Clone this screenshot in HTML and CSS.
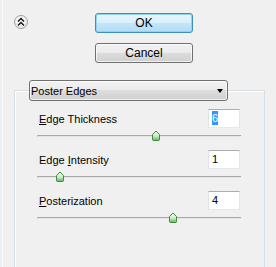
FILE: index.html
```html
<!DOCTYPE html>
<html lang="en">
<head>
    <meta charset="UTF-8">
    <meta name="viewport" content="width=device-width, initial-scale=1.0">
    <title>Poster Edges</title>
    <link rel="stylesheet" href="styles.css">
</head>
<body>
    <div class="window">
        <div class="header">
            <button class="collapse" title="Collapse">
                <svg width="10" height="10" viewBox="0 0 10 10">
                    <path d="M2 4.5 L5 1.5 L8 4.5 M2 8.5 L5 5.5 L8 8.5" fill="none" stroke="#1a1a1a" stroke-width="1.5"/>
                </svg>
            </button>
            <div class="actions">
                <button class="btn btn-default">OK</button>
                <button class="btn">Cancel</button>
            </div>
        </div>

        <div class="group">
            <div class="select">
                <span>Poster Edges</span>
                <span class="arrow"></span>
            </div>

            <div class="param">
                <div class="param-head">
                    <label><u>E</u>dge Thickness</label>
                    <div class="field"><span class="selected">6</span></div>
                </div>
                <div class="slider">
                    <div class="track"></div>
                    <svg class="thumb" style="left: 115px" width="8" height="11" viewBox="0 0 8 11">
                        <path d="M0.5 4.5 L4 1 L7.5 4.5 V9.5 Q7.5 10.5 6.5 10.5 H1.5 Q0.5 10.5 0.5 9.5 Z" fill="url(#thumbFill)" stroke="#3d8a3d"/>
                    </svg>
                </div>
            </div>

            <div class="param">
                <div class="param-head">
                    <label>Edge <u>I</u>ntensity</label>
                    <div class="field">1</div>
                </div>
                <div class="slider">
                    <div class="track"></div>
                    <svg class="thumb" style="left: 19px" width="8" height="11" viewBox="0 0 8 11">
                        <path d="M0.5 4.5 L4 1 L7.5 4.5 V9.5 Q7.5 10.5 6.5 10.5 H1.5 Q0.5 10.5 0.5 9.5 Z" fill="url(#thumbFill)" stroke="#3d8a3d"/>
                    </svg>
                </div>
            </div>

            <div class="param">
                <div class="param-head">
                    <label><u>P</u>osterization</label>
                    <div class="field">4</div>
                </div>
                <div class="slider">
                    <div class="track"></div>
                    <svg class="thumb" style="left: 132px" width="8" height="11" viewBox="0 0 8 11">
                        <path d="M0.5 4.5 L4 1 L7.5 4.5 V9.5 Q7.5 10.5 6.5 10.5 H1.5 Q0.5 10.5 0.5 9.5 Z" fill="url(#thumbFill)" stroke="#3d8a3d"/>
                    </svg>
                </div>
            </div>
        </div>
    </div>

    <svg width="0" height="0" class="defs">
        <defs>
            <linearGradient id="thumbFill" x1="0" y1="0" x2="0" y2="1">
                <stop offset="0" stop-color="#f4fbf4"/>
                <stop offset="0.55" stop-color="#c9e9c9"/>
                <stop offset="1" stop-color="#5fb35f"/>
            </linearGradient>
        </defs>
    </svg>
</body>
</html>
```

FILE: styles.css
```css
html, body {
    margin: 0;
    height: 100%;
}
body {
    background-color: #f0f0f0;
    font-family: "Liberation Sans", Arial, sans-serif;
    font-size: 11px;
    color: #000;
    overflow: hidden;
}
.window {
    margin-left: 2px;
    border-left: 1px solid #fbfbfb;
    height: 100%;
    box-sizing: border-box;
}
.header {
    display: flex;
    align-items: flex-start;
    padding-top: 13px;
}
.collapse {
    margin: 2px 0 0 11px;
    width: 14px;
    height: 14px;
    padding: 0;
    border: 1px solid #9e9e9e;
    border-radius: 50%;
    background: radial-gradient(circle at 50% 35%, #ffffff, #e2e2e2);
    display: flex;
    align-items: center;
    justify-content: center;
}
.actions {
    margin-left: 67px;
    display: flex;
    flex-direction: column;
    gap: 10px;
}
.btn {
    width: 98px;
    height: 20px;
    padding: 0;
    border: 1px solid #707070;
    border-radius: 3px;
    font-family: "Liberation Sans", Arial, sans-serif;
    font-size: 12px;
    color: #000;
    background: linear-gradient(#f2f2f2, #ebebeb 50%, #dddddd 50%, #cfcfcf);
    box-shadow: inset 0 0 0 1px rgba(255,255,255,0.7);
}
.btn-default {
    border-color: #3c8fc6;
    background: linear-gradient(#e8f5fc, #d9f0fb 50%, #c2e6f8 50%, #b3dcf2);
    box-shadow: inset 0 0 0 1px #8fd3f5;
}
.group {
    margin: 27px 0 0 11px;
    width: 251px;
    box-sizing: border-box;
    border: 1px solid #d5dfe5;
    border-bottom: 0;
    box-shadow: inset 1px 1px 0 #ffffff;
    padding: 0 23px 35px 22px;
}
.select {
    margin: -11px 0 8px -8px;
    width: 199px;
    height: 21px;
    box-sizing: border-box;
    border: 1px solid #707070;
    border-radius: 3px;
    padding: 0 4px 0 1px;
    display: flex;
    align-items: center;
    justify-content: space-between;
    background: linear-gradient(#f2f2f2, #ebebeb 50%, #dddddd 50%, #cfcfcf);
    box-shadow: inset 0 0 0 1px rgba(255,255,255,0.7);
}
.arrow {
    width: 0;
    height: 0;
    border-left: 3.5px solid transparent;
    border-right: 3.5px solid transparent;
    border-top: 4px solid #000;
}
.param-head {
    height: 19px;
    display: flex;
    align-items: center;
    justify-content: space-between;
}
.param-head label {
    margin-left: 2px;
    padding-top: 1px;
}
.field {
    width: 32px;
    height: 19px;
    margin-right: 1px;
    box-sizing: border-box;
    border: 1px solid #e2e3ea;
    border-top-color: #abadb3;
    border-bottom-color: #e3e9ef;
    background-color: #fff;
    padding-left: 3px;
    line-height: 17px;
}
.selected {
    background-color: #3399ff;
    color: #fff;
    padding: 1px 0;
}
.slider {
    position: relative;
    height: 22px;
    box-sizing: border-box;
    padding-top: 7px;
}
.track {
    height: 1px;
    border-top: 1px solid #a8a8a8;
    border-left: 1px solid #c4c4c4;
    border-radius: 2px 0 0 2px;
    background-color: #e4e4e4;
}
.thumb {
    position: absolute;
    top: 2px;
}
.defs {
    position: absolute;
}
```
